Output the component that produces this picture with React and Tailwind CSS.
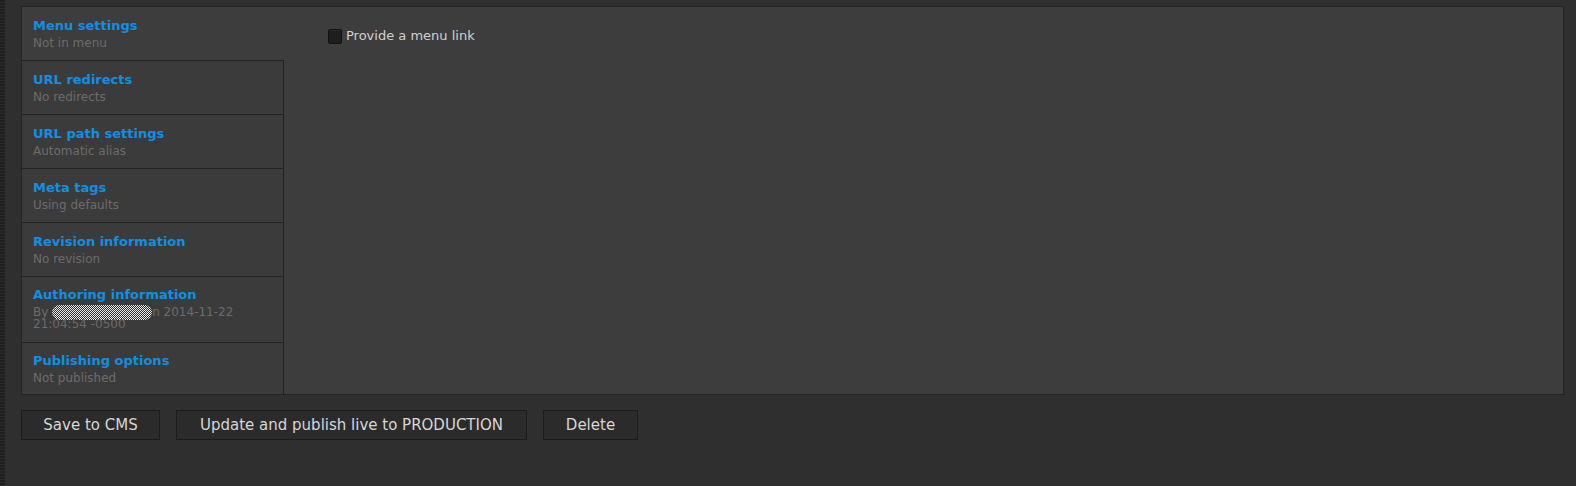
import React from "react";

const tabs = [
  { title: "Menu settings", summary: "Not in menu", active: true },
  { title: "URL redirects", summary: "No redirects" },
  { title: "URL path settings", summary: "Automatic alias" },
  { title: "Meta tags", summary: "Using defaults" },
  { title: "Revision information", summary: "No revision" },
  { title: "Authoring information", summary: null, authoring: true },
  { title: "Publishing options", summary: "Not published", last: true },
];

function Tab({ t }) {
  const pb = t.last ? "pb-0 flex-1 min-h-0" : t.authoring ? "pb-[11px]" : "pb-[9px]";
  const pt = t.authoring || t.last ? "pt-[10px]" : "pt-[11px]";
  const extra = t.authoring ? "pb-[12px]" : "";
  const base = `pl-[11px] pr-[11px] ${pt} ${pb} ${extra}`;
  const border = t.last ? "" : "border-b border-[#232323]";
  const bg = t.active ? "bg-[#3d3d3d] w-[262px]" : "bg-[#3b3b3b] w-[262px] border-r border-[#232323]";
  return (
    <div className={`${base} ${border} ${bg}`}>
      <div className="text-[13px] leading-[16px] font-bold text-[#118fe2]">{t.title}</div>
      {t.authoring ? (
        <div className="text-[12px] leading-[12px] text-[#6b6b6b] pt-[3px]">
          By{" "}
          <span className="inline-block align-middle w-[100px] h-[15px] -my-[2px] rounded-full bg-[repeating-conic-gradient(#f0f0f0_0_25%,#2a2a2a_0_50%)] bg-[length:2px_2px]" />
          n 2014-11-22 21:04:54 -0500
        </div>
      ) : (
        <div className="text-[12px] leading-[16px] text-[#6b6b6b] pt-[1px]">{t.summary}</div>
      )}
    </div>
  );
}

function Button({ children, w }) {
  return (
    <button className={`${w} h-[30px] bg-[#2b2b2b] border border-[#1c1c1c] text-[15px] leading-[18px] text-[#d6d6d6] text-center`}>
      {children}
    </button>
  );
}

export default function App() {
  return (
    <div
      className="h-[486px] w-full flex bg-[#2f2f2f] overflow-hidden"
      style={{ fontFamily: '"DejaVu Sans", "Liberation Sans", sans-serif' }}
    >
      <div className="w-[5px] h-full shrink-0 bg-[#242424] bg-[repeating-linear-gradient(0deg,#2a2a2a_0_1px,#1f1f1f_1px_3px)]" />
      <div className="flex-1 pl-[16px] pr-[12px] pt-[6px]">
        <div className="flex h-[389px] border border-[#232323] bg-[#3d3d3d]">
          <div className="flex flex-col w-[262px] shrink-0 overflow-hidden">
            {tabs.map((t) => (
              <Tab key={t.title} t={t} />
            ))}
          </div>
          <div className="flex-1 pl-[44px] pt-[21px]">
            <label className="flex items-center gap-[4px] text-[13px] leading-[16px] text-[#d0d0d0]">
              <span className="w-[14px] h-[15px] rounded-[2px] bg-[#1e1e1e] border border-[#111] shadow-[inset_0_1px_0_#2a2a2a]" />
              Provide a menu link
            </label>
          </div>
        </div>
        <div className="flex gap-[16px] pt-[15px]">
          <Button w="w-[139px]">Save to CMS</Button>
          <Button w="w-[351px]">Update and publish live to PRODUCTION</Button>
          <Button w="w-[95px]">Delete</Button>
        </div>
      </div>
    </div>
  );
}
